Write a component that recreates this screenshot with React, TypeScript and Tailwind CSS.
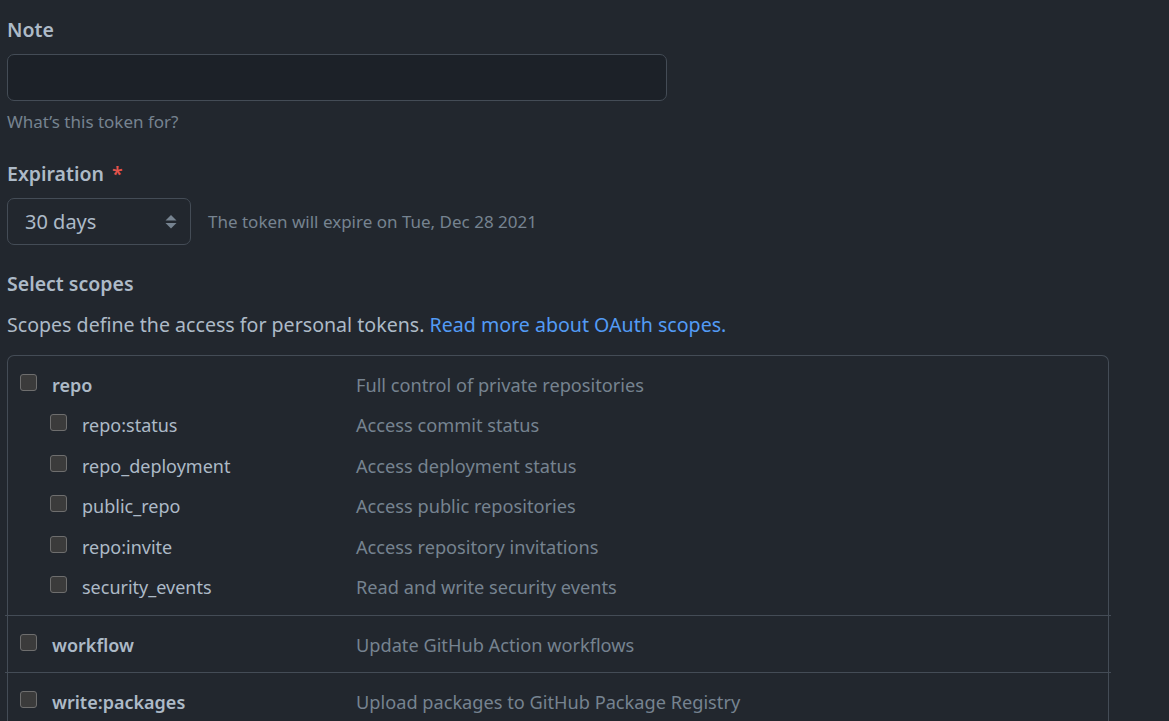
import React from "react";

const font = { fontFamily: '"Noto Sans", "Open Sans", sans-serif' };

function Checkbox() {
  return (
    <span className="mb-[6px] inline-block h-[17px] w-[17px] shrink-0 rounded-[3px] border border-[#6e6e6e] bg-[#3b3b3b]" />
  );
}

type Row = { name: string; desc: string; sub?: boolean };

function ScopeRow({ name, desc, sub }: Row) {
  return (
    <div className="flex h-[40.5px] items-center">
      <div className={`flex w-[348px] shrink-0 items-center ${sub ? "pl-[42px]" : "pl-[12px]"}`}>
        <Checkbox />
        <span className={`ml-[15px] text-[18px] text-[#adbac7] ${sub ? "font-normal" : "font-semibold"}`}>{name}</span>
      </div>
      <span className="text-[18.2px] text-[#768390]">{desc}</span>
    </div>
  );
}

export default function App() {
  const repoRows: Row[] = [
    { name: "repo", desc: "Full control of private repositories" },
    { name: "repo:status", desc: "Access commit status", sub: true },
    { name: "repo_deployment", desc: "Access deployment status", sub: true },
    { name: "public_repo", desc: "Access public repositories", sub: true },
    { name: "repo:invite", desc: "Access repository invitations", sub: true },
    { name: "security_events", desc: "Read and write security events", sub: true },
  ];
  return (
    <div style={font} className="h-[721px] w-[1169px] overflow-hidden bg-[#22272e] pl-[7px] pt-[17px]">
      <div className="h-[26px] text-[19.5px] font-semibold leading-[26px] text-[#adbac7]">Note</div>
      <div className="mt-[11px] h-[47px] w-[660px] rounded-[7px] border border-[#444c56] bg-[#1c2128]" />
      <div className="mt-[9px] h-[24px] text-[17px] leading-[24px] text-[#768390]">What’s this token for?</div>

      <div className="mt-[27px] h-[26px] text-[19.5px] font-semibold leading-[26px] text-[#adbac7]">
        Expiration <span className="ml-[3px] text-[#e5534b]">*</span>
      </div>
      <div className="mt-[11px] flex h-[47px] items-center">
        <div className="flex h-[47px] w-[184px] items-center justify-between rounded-[7px] border border-[#444c56] bg-[#22272e] pl-[17px] pr-[13px]">
          <span className="text-[20px] text-[#adbac7]">30 days</span>
          <svg width="12" height="14" viewBox="0 0 12 14">
            <path d="M6 0 L11.5 5.5 L0.5 5.5 Z" fill="#768390" />
            <path d="M0.5 8 L11.5 8 L6 13.5 Z" fill="#768390" />
          </svg>
        </div>
        <span className="ml-[17px] text-[17px] text-[#768390]">The token will expire on Tue, Dec 28 2021</span>
      </div>

      <div className="mt-[26px] h-[26px] text-[19.5px] font-semibold leading-[26px] text-[#adbac7]">Select scopes</div>
      <div className="mt-[15px] h-[26px] text-[19.6px] leading-[26px] text-[#adbac7]">
        Scopes define the access for personal tokens. <span className="text-[#539bf5]">Read more about OAuth scopes.</span>
      </div>

      <div className="mt-[17px] w-[1102px] rounded-t-[7px] border border-b-0 border-[#444c56]">
        <div className="pb-[7px] pt-[9px]">
          {repoRows.map((r) => (
            <ScopeRow key={r.name} {...r} />
          ))}
        </div>
        <div className="-mx-[3px] border-t border-[#444c56] px-[3px] pb-[6px] pt-[9px]">
          <ScopeRow name="workflow" desc="Update GitHub Action workflows" />
        </div>
        <div className="-mx-[3px] border-t border-[#444c56] px-[3px] pb-[6px] pt-[10px]">
          <ScopeRow name="write:packages" desc="Upload packages to GitHub Package Registry" />
        </div>
      </div>
    </div>
  );
}
